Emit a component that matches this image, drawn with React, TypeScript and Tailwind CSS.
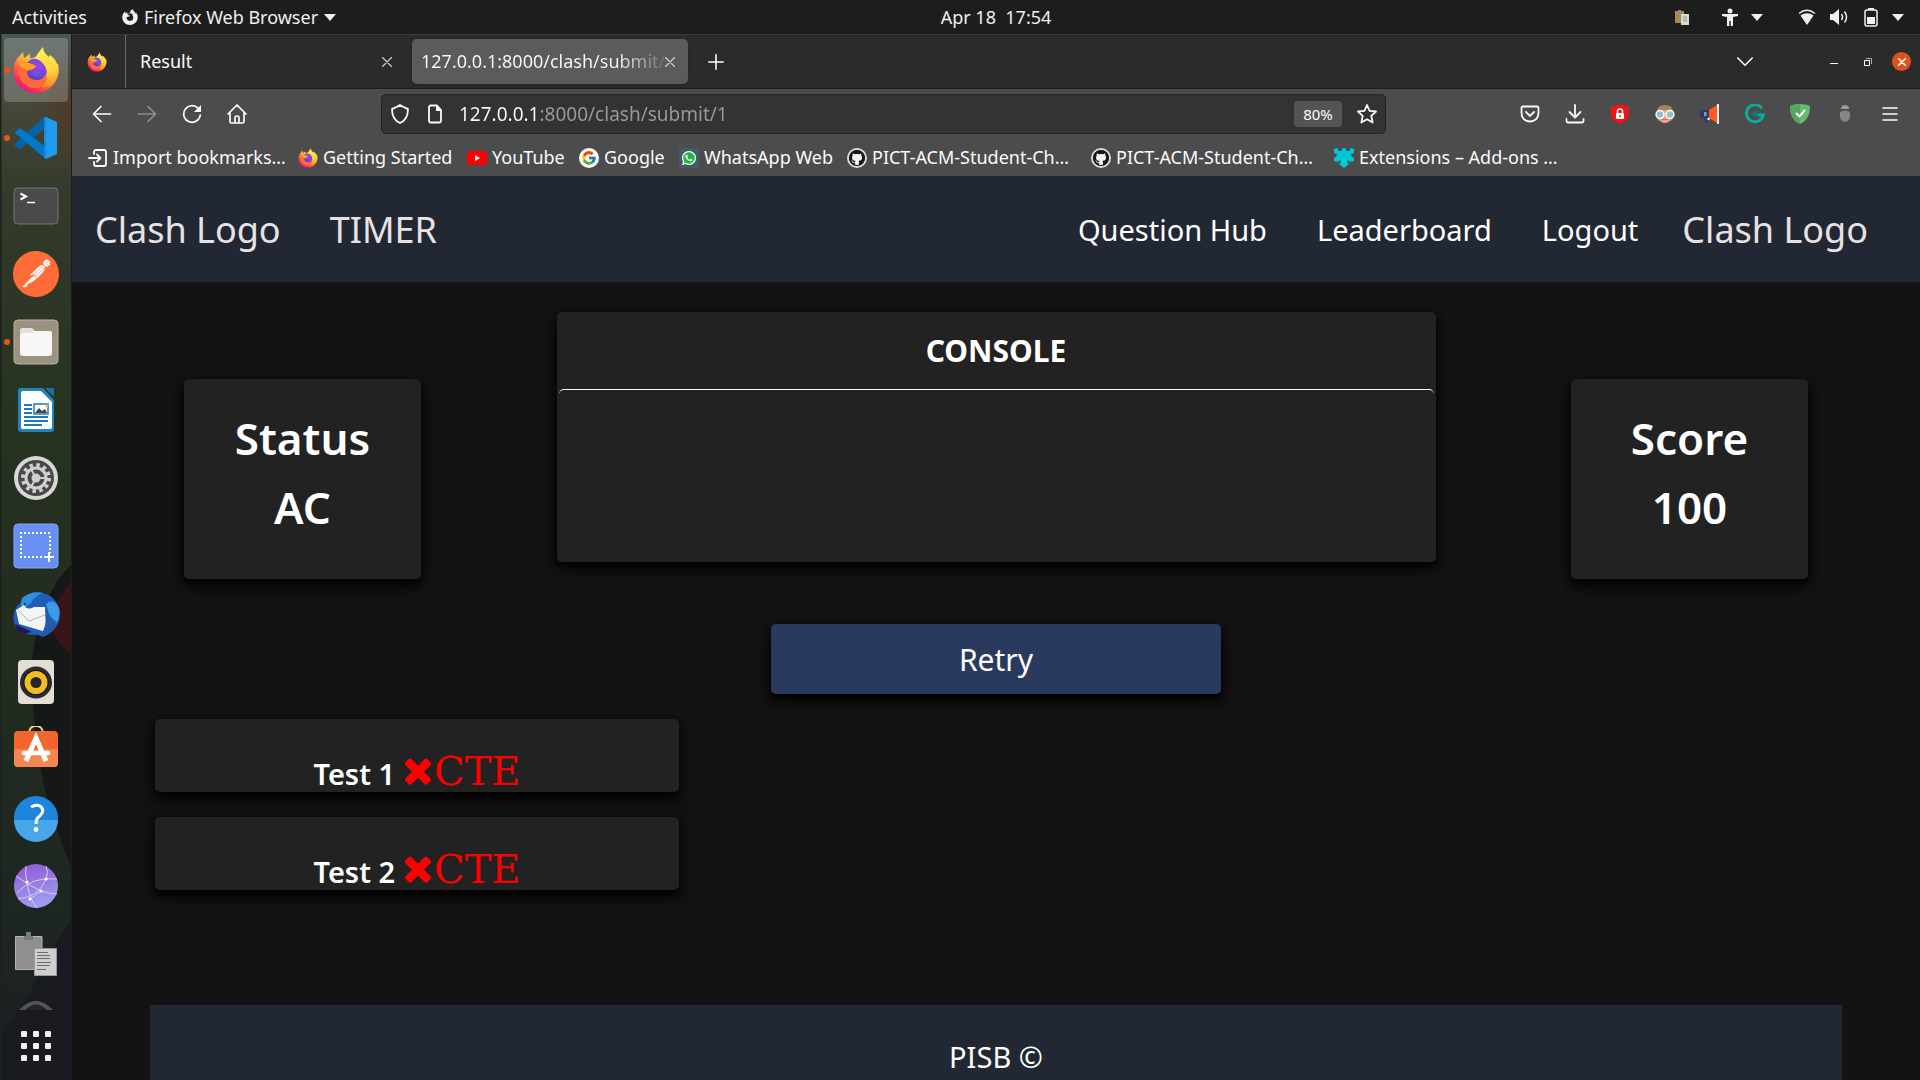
import type { ReactNode } from "react";
import { FcGoogle } from "react-icons/fc";
import { FaGithub, FaWhatsapp } from "react-icons/fa";
import { SiFirefoxbrowser, SiPostman } from "react-icons/si";

/* ---------- shared drawings ---------- */

function Firefox({ size, id }: { size: number; id: string }) {
  return (
    <svg width={size} height={size} viewBox="0 0 48 48" aria-hidden="true">
      <defs>
        <linearGradient id={`${id}-body`} x1="0.85" y1="0.1" x2="0.25" y2="0.95">
          <stop offset="0" stopColor="#fff44f" />
          <stop offset="0.35" stopColor="#ffbd3a" />
          <stop offset="0.62" stopColor="#ff6a3d" />
          <stop offset="0.85" stopColor="#ff2f52" />
          <stop offset="1" stopColor="#e31587" />
        </linearGradient>
        <radialGradient id={`${id}-ball`} cx="0.6" cy="0.35" r="0.7">
          <stop offset="0" stopColor="#a63df0" />
          <stop offset="0.6" stopColor="#6e4be0" />
          <stop offset="1" stopColor="#4a3aa8" />
        </radialGradient>
        <linearGradient id={`${id}-tail`} x1="0.5" y1="0" x2="0.7" y2="1">
          <stop offset="0" stopColor="#fff44f" />
          <stop offset="0.6" stopColor="#ffd23c" />
          <stop offset="1" stopColor="#ff8a1f" />
        </linearGradient>
      </defs>
      <path
        d="M1.5 25C1.5 18 4 12.500 8 9.500L11 6L12 12C14 11 15.500 9.500 17.500 7.500L18.500 12.500C22 11 29 11 33 15L46 18C49 33 39 47 24 47C11 47 1.500 37.500 1.500 25Z"
        fill={`url(#${id}-body)`}
      />
      <circle cx="24" cy="23.500" r="11" fill={`url(#${id}-ball)`} />
      <path
        d="M22 12.500C25 10 27 5 31 1C31.500 6 34 8.500 37 11L38 9C44 13 47 20 46.500 27C45 37 36 42 29 41C35 38 37 31 34.500 24C32.500 18 29 13.500 22 12.500Z"
        fill={`url(#${id}-tail)`}
      />
      <path
        d="M6 16C12 15.500 19 16.500 24 20C23 23 19 24 15.500 25C14 29 18 34 25 34C29 34 32 32 34 29C35 38 28 43 21 42C11 41 5 32 6 16Z"
        fill="#ff6a3d"
      />
      <path d="M6 16C12 15.500 19 16.500 24 20C23 23 19 23 15.500 24.500C12 23 8 21 6 16Z" fill="#ffa11c" />
    </svg>
  );
}

const stroke = {
  fill: "none",
  stroke: "currentColor",
  strokeLinecap: "round" as const,
  strokeLinejoin: "round" as const,
};

function Line({ d, size = 20, w = 2 }: { d: string; size?: number; w?: number }) {
  return (
    <svg width={size} height={size} viewBox="0 0 20 20" aria-hidden="true" {...stroke} strokeWidth={w}>
      <path d={d} />
    </svg>
  );
}

function Caret() {
  return (
    <svg width="12" height="7" viewBox="0 0 12 7" aria-hidden="true">
      <path d="M0 0H12L6 7Z" fill="#f0f0f0" />
    </svg>
  );
}

/* ---------- desktop top bar ---------- */

function TopBar() {
  return (
    <header className="grid h-[34px] shrink-0 grid-cols-[72px_1fr_auto_1fr] items-center bg-[#1d1d1d] px-3 text-[18px] text-[#f0f0f0]">
      <button className="text-left whitespace-nowrap">Activities</button>
      <button className="ml-[38px] flex items-center gap-[6px] justify-self-start">
        <SiFirefoxbrowser size={16} />
        <span>Firefox Web Browser</span>
        <Caret />
      </button>
      <button className="whitespace-pre">Apr 18  17:54</button>
      <div className="flex items-center justify-end pr-1">
        <svg width="16" height="16" viewBox="0 0 16 16" className="mr-8" aria-hidden="true">
          <path d="M1 2H10V14H1Z" fill="#a98657" />
          <path d="M4 1H7V4H4Z" fill="#8c8c84" />
          <path d="M7 5H15V16H7Z" fill="#d9d9d6" />
          <path d="M9 8H13M9 10H13M9 12H13" stroke="#999" />
        </svg>
        <svg width="16" height="18" viewBox="0 0 16 18" className="mr-[13px]" aria-hidden="true">
          <circle cx="8" cy="3" r="2.500" fill="#f0f0f0" />
          <path d="M0 6H16V8L11 9V18H8.700V13H7.300V18H5V9L0 8Z" fill="#f0f0f0" />
        </svg>
        <Caret />
        <svg width="18" height="16" viewBox="0 0 18 16" className="ml-[35px]" aria-hidden="true">
          <path d="M1 4.500C6 0.500 12 0.500 17 4.500" fill="none" stroke="#f0f0f0" strokeWidth="1.500" />
          <path d="M2.500 6.500C7 3.500 11 3.500 15.500 6.500L9 16Z" fill="#f0f0f0" />
        </svg>
        <svg width="18" height="16" viewBox="0 0 18 16" className="ml-[14px]" aria-hidden="true">
          <path d="M0 5H3L9 0V16L3 11H0Z" fill="#f0f0f0" />
          <path d="M11.500 5Q13.500 8 11.500 11M14.500 2.500Q18.500 8 14.500 13.500" fill="none" stroke="#f0f0f0" strokeWidth="1.500" />
        </svg>
        <svg width="14" height="19" viewBox="0 0 14 19" className="mr-[14px] ml-4" aria-hidden="true">
          <path d="M4 0H10V2H4Z" fill="#f0f0f0" />
          <rect x="1" y="2" width="12" height="16" rx="2" fill="none" stroke="#f0f0f0" strokeWidth="1.500" />
          <path d="M3 9H11V16H3Z" fill="#f0f0f0" />
        </svg>
        <Caret />
      </div>
    </header>
  );
}

/* ---------- dock ---------- */

const dockIcons: { name: string; running?: boolean; active?: boolean; art: ReactNode }[] = [
  { name: "Firefox", running: true, active: true, art: <Firefox size={48} id="dock" /> },
  {
    name: "Visual Studio Code",
    running: true,
    art: (
      <>
        <path d="M3 30L32 3V15L8 35L3 32Z" fill="#0065a9" />
        <path d="M3 18L8 14L34 33V45L3 19Z" fill="#007acc" />
        <path d="M34 3L45 8V40L34 45Z" fill="#1f9cf0" />
        <path d="M32 3L34 3V45L32 44Z" fill="#1789d8" />
      </>
    ),
  },
  {
    name: "Terminal",
    art: (
      <>
        <rect x="2" y="6" width="44" height="36" rx="4" fill="#4a4a4a" stroke="#767676" />
        <path d="M8.500 11.500L14 14.500L8.500 17.500" fill="none" stroke="#fff" strokeWidth="2" />
        <path d="M15 20.500H23" stroke="#fff" strokeWidth="1.500" />
      </>
    ),
  },
  {
    name: "Postman",
    art: (
      <>
        <circle cx="24" cy="24" r="22" fill="#fff" />
        <SiPostman x="1" y="1" size={46} color="#ff6c37" />
      </>
    ),
  },
  {
    name: "Files",
    running: true,
    art: (
      <>
        <rect x="2" y="2" width="44" height="44" rx="4" fill="#9b917f" stroke="#bcb4a5" />
        <path d="M8 14V12Q8 10 10 10H20L23 13V20H8Z" fill="#e4e0d8" />
        <path d="M10 15H20L23 13H38Q40 13 40 15V35Q40 38 37 38H11Q8 38 8 35V17Z" fill="#f8f7f5" />
      </>
    ),
  },
  {
    name: "LibreOffice Writer",
    art: (
      <>
        <path d="M9 2H31L42 14V43Q42 46 39 46H9Q6 46 6 43V5Q6 2 9 2Z" fill="#2383bd" />
        <path d="M33 2H42V11Z" fill="#1a72a8" />
        <path d="M10 5H29L40 16V41Q40 43 38 43H10Q9 43 9 41V7Z" fill="#fff" />
        <path d="M12 19H20M12 23H20M12 27H20M12 31H36M12 35H36M12 39H30" stroke="#1f7ab5" strokeWidth="2" />
        <path d="M22 18H36V28H22Z" fill="#fff" stroke="#1f7ab5" strokeWidth="1.500" />
        <path d="M23 27L27 22L30 25L33 23L35 27Z" fill="#444" />
        <path d="M32 18.500H36V22Z" fill="#f5b63c" />
      </>
    ),
  },
  {
    name: "Settings",
    art: (
      <>
        <circle cx="24" cy="24" r="22" fill="#d8d8d6" />
        <circle cx="24" cy="24" r="18" fill="#484848" />
        <circle cx="24" cy="24" r="13" fill="none" stroke="#d0d0ce" strokeWidth="4" strokeDasharray="3.400 3.400" />
        <circle cx="24" cy="24" r="10" fill="none" stroke="#d0d0ce" strokeWidth="3" />
        <circle cx="24" cy="24" r="4.500" fill="#d0d0ce" />
        <path d="M24 24H34M24 24L19 15M24 24L19 33" stroke="#d0d0ce" strokeWidth="2" />
      </>
    ),
  },
  {
    name: "Screenshot",
    art: (
      <>
        <rect x="2" y="2" width="44" height="44" rx="4" fill="#6790f2" stroke="#86a6f5" />
        <path d="M8 11H38M9 14V36M38 14V31M8 35H32" fill="none" stroke="#fff" strokeWidth="2" strokeDasharray="2 2" />
        <path d="M37 30V40M32 35H42" stroke="#fff" strokeWidth="2" />
      </>
    ),
  },
  {
    name: "Thunderbird",
    art: (
      <>
        <path d="M12 7Q19 1 30 3Q45 6 48 22Q48 40 31 47L26 45Q8 45 3 36Q-2 22 9 12Z" fill="#1f5fb8" />
        <path d="M10 8Q20 0 31 3Q22 6 19 13L10 20Q8 13 10 8Z" fill="#2f8fdd" />
        <path d="M34 14Q41 7 47 18Q49 30 41 38Q38 27 34 14Z" fill="#3b9be6" />
        <path d="M3 34L20 42L12 44Q5 42 3 34Z" fill="#2a1458" />
        <path d="M4 20L12 15Q15 21 22 17L33 17L34 42L7 34Z" fill="#f6f5f6" />
        <path d="M6 20L17 31L33 25" fill="none" stroke="#b5b2b8" />
        <path d="M33 16Q37 30 29 46Q42 42 45 32Q39 30 33 16Z" fill="#245bab" />
        <circle cx="13" cy="14" r="1" fill="#102a55" />
      </>
    ),
  },
  {
    name: "Rhythmbox",
    art: (
      <>
        <rect x="6" y="2" width="36" height="44" rx="4" fill="#e3ded3" />
        <circle cx="24" cy="24.500" r="16" fill="#2c2b33" />
        <circle cx="24" cy="24.500" r="12.500" fill="#111" />
        <circle cx="24" cy="24.500" r="11.500" fill="#f0bd22" />
        <circle cx="24" cy="24.500" r="5.500" fill="#26252a" />
      </>
    ),
  },
  {
    name: "Software",
    art: (
      <>
        <path d="M17 10V6Q18 0 24 0Q30 0 31 6V10" fill="none" stroke="#f8cf94" strokeWidth="2" />
        <rect x="2" y="5" width="44" height="36" rx="4" fill="#f2662c" />
        <path d="M2 23H46V37Q46 41 42 41H6Q2 41 2 37Z" fill="#f58551" />
        <path d="M14 35L24 12L34 35" fill="none" stroke="#fff" strokeWidth="5" />
        <path d="M12 27H36" stroke="#fff" strokeWidth="4.500" strokeLinecap="round" />
      </>
    ),
  },
  {
    name: "Help",
    art: (
      <>
        <circle cx="24" cy="24" r="22" fill="#1d86dc" />
        <path d="M2 26H46A22 22 0 0 1 2 26Z" fill="#46a6e8" />
        <path d="M19 13Q24 10 28 12Q32 15 30 19Q28 22 25.500 24Q24 26 24 30" fill="none" stroke="#fff" strokeWidth="3" />
        <circle cx="24" cy="35.500" r="2.400" fill="#fff" />
      </>
    ),
  },
  {
    name: "Web",
    art: (
      <>
        <defs>
          <linearGradient id="web" x1="0" y1="0" x2="0.300" y2="1">
            <stop offset="0" stopColor="#8f55d2" />
            <stop offset="1" stopColor="#9c9df0" />
          </linearGradient>
        </defs>
        <circle cx="24" cy="24" r="22" fill="url(#web)" />
        <path
          d="M14 4Q13 12 15 21Q17 36 25 46M34 4Q37 10 34 17Q27 35 6 37M4 14Q14 22 29 29Q38 32 45 32M5 31Q20 14 45 17M18 37L29 29"
          fill="none"
          stroke="#d9c8f5"
        />
        <g fill="#fff">
          <circle cx="15" cy="20" r="1.600" />
          <circle cx="34" cy="17" r="1.600" />
          <circle cx="29" cy="29" r="1.600" />
          <circle cx="18" cy="37" r="1.600" />
        </g>
      </>
    ),
  },
  {
    name: "Clipboard",
    art: (
      <>
        <path d="M3.500 6.500H30V39.500H3.500Z" fill="#8f8f8f" stroke="#b4b4b4" />
        <path d="M12 10V6H14V2H19V6H21V10Z" fill="#7a7a7a" />
        <path d="M22.500 18.500H44.500V45.500H22.500Z" fill="#cfcfcf" stroke="#999" />
        <path d="M25 22.500H36M25 25.500H38M25 28.500H38M25 32.500H39M25 35.500H38M25 39.500H34" stroke="#6b6b6b" />
      </>
    ),
  },
];

function Dock() {
  return (
    <nav aria-label="Dock" className="relative flex w-[72px] shrink-0 flex-col items-center gap-1 overflow-hidden bg-[#232c21] pt-1">
      <svg className="absolute inset-0 h-full w-full" viewBox="0 0 72 1046" preserveAspectRatio="none" aria-hidden="true">
        <defs>
          <linearGradient id="wall" x1="0" y1="0" x2="0" y2="1">
            <stop offset="0" stopColor="#4b5653" />
            <stop offset="0.080" stopColor="#454536" />
            <stop offset="0.150" stopColor="#333b2b" />
            <stop offset="0.400" stopColor="#263120" />
            <stop offset="0.700" stopColor="#202a20" />
            <stop offset="0.900" stopColor="#1d2422" />
            <stop offset="1" stopColor="#1a1b22" />
          </linearGradient>
          <radialGradient id="brown">
            <stop offset="0" stopColor="#4d3a27" />
            <stop offset="1" stopColor="#4d3a27" stopOpacity="0" />
          </radialGradient>
        </defs>
        <rect width="72" height="1046" fill="url(#wall)" />
        <ellipse cx="68" cy="80" rx="36" ry="60" fill="url(#brown)" />
        <path d="M72 530Q38 560 30 640Q36 720 46 760Q57 800 72 835Z" fill="#161717" />
        <path d="M72 548Q56 565 48 588Q60 614 72 620Z" fill="#3a1417" />
        <path d="M72 885Q44 925 30 960L0 1000V1046H72Z" fill="#1a1b21" />
        <path d="M0 0H1.500V1046H0Z" fill="#1a211f" />
        <path d="M71 0H72V1046H71Z" fill="#1a1d1a" />
      </svg>
      {dockIcons.map((icon) => (
        <button
          key={icon.name}
          aria-label={icon.name}
          className={`relative flex size-16 shrink-0 items-center justify-center rounded ${icon.active ? "bg-white/20" : ""}`}
        >
          {icon.running && <span className="absolute top-[29px] left-0 size-[6px] rounded-full bg-[#e95420]" />}
          <svg width="48" height="48" viewBox="0 0 48 48" aria-hidden="true">
            {icon.art}
          </svg>
        </button>
      ))}
      <div className="relative h-[22px] shrink-0">
        <svg width="48" height="22" viewBox="0 0 48 22" aria-hidden="true">
          <path d="M7 20Q24 2 41 20Z" fill="#555" />
          <path d="M13 20Q24 9 35 20Z" fill="#242424" />
        </svg>
      </div>
      <button aria-label="Show applications" className="relative mt-[11px] grid grid-cols-3 gap-[6px] py-1">
        {[0, 1, 2, 3, 4, 5, 6, 7, 8].map((n) => (
          <span key={n} className="size-[6px] rounded-[1px] bg-[#f2f2f2]" />
        ))}
      </button>
    </nav>
  );
}

/* ---------- browser chrome ---------- */

function TabStrip() {
  return (
    <div className="flex h-[55px] shrink-0 items-center border-t border-b border-t-[#3a3a3a] border-b-[#1c1c1c] bg-[#2b2b2b] text-[18px] text-[#fbfbfe]">
      <button aria-label="Pinned tab" className="flex w-[54px] items-center justify-center self-stretch border-r border-[#6a6a6a] pr-1">
        <Firefox size={20} id="pin" />
      </button>
      <div role="tab" className="flex w-[282px] items-center justify-between pr-4 pl-[14px]">
        <span>Result</span>
        <button aria-label="Close tab" className="text-[#d0d0d0]">
          <Line size={10} d="M1 1L19 19M19 1L1 19" w={2.4} />
        </button>
      </div>
      <div role="tab" aria-selected="true" className="ml-1 flex h-[45px] w-[276px] items-center justify-between rounded-[5px] bg-[#5b5b5b] pr-[14px] pl-[9px] shadow-sm">
        <span className="bg-linear-to-r from-[#fbfbfe] from-80% to-[#6a6a6a] bg-clip-text whitespace-nowrap text-transparent">
          127.0.0.1:8000/clash/submit/
        </span>
        <button aria-label="Close tab" className="text-[#d0d0d0]">
          <Line size={10} d="M1 1L19 19M19 1L1 19" w={2.4} />
        </button>
      </div>
      <button aria-label="New tab" className="ml-5">
        <Line size={16} d="M10 1V19M1 10H19" w={2} />
      </button>
      <div className="ml-auto flex items-center pr-[9px]">
        <button aria-label="List all tabs" className="mr-[77px]">
          <Line size={16} d="M1 5L10 14L19 5" w={2} />
        </button>
        <button aria-label="Minimize" className="mt-1 h-px w-2 bg-white" />
        <button aria-label="Restore" className="mr-5 ml-[26px]">
          <svg width="8" height="8" viewBox="0 0 8 8" fill="none" aria-hidden="true">
            <path d="M0.500 2.500H5.500V7.500H0.500Z" stroke="#fff" />
            <path d="M2 0.500H7.500V6" stroke="#aaa" />
          </svg>
        </button>
        <button aria-label="Close" className="flex size-[19px] items-center justify-center rounded-full bg-[#e2501c]">
          <Line size={8} d="M1 1L19 19M19 1L1 19" w={4} />
        </button>
      </div>
    </div>
  );
}

function Toolbar() {
  return (
    <div className="flex h-[50px] shrink-0 items-center text-[#fbfbfe]">
      <div className="flex w-[309px] items-center gap-[25px] pl-5">
        <button aria-label="Back">
          <Line d="M18.500 10H1.500M9 2.500L1.500 10L9 17.500" w={1.7} />
        </button>
        <button aria-label="Forward" className="text-[#8f8f90]">
          <Line d="M1.500 10H18.500M11 2.500L18.500 10L11 17.500" w={1.7} />
        </button>
        <button aria-label="Reload">
          <svg width="20" height="20" viewBox="0 0 20 20" aria-hidden="true">
            <path d="M16 4.200A8.300 8.300 0 1 0 18.300 11" {...stroke} strokeWidth="1.700" />
            <path d="M19 1V8H12Z" fill="currentColor" />
          </svg>
        </button>
        <button aria-label="Home">
          <Line d="M1 10L10 1L19 10M3 8.500V17.500Q3 19 4.500 19H15.500Q17 19 17 17.500V8.500M8 19V14Q8 12 10 12Q12 12 12 14V19" w={1.7} />
        </button>
      </div>
      <div className="flex h-10 w-[1005px] items-center rounded-[5px] border border-[#222] bg-[#333] pr-2 pl-2">
        <Line d="M10 1C13 3 16 4 18 5C18 12 15 17 10 19C5 17 2 12 2 5C4 4 7 3 10 1Z" w={1.8} />
        <svg width="20" height="20" viewBox="0 0 20 20" className="mr-[14px] ml-[15px]" aria-hidden="true">
          <path d="M12 1.500H6Q4 1.500 4 3.500V16.500Q4 18.500 6 18.500H14Q16 18.500 16 16.500V6Z" {...stroke} strokeWidth="1.800" />
          <path d="M11 1V7H17Z" fill="currentColor" />
        </svg>
        <input
          aria-label="Address"
          defaultValue="127.0.0.1:8000/clash/submit/1"
          className="min-w-0 flex-1 bg-[linear-gradient(90deg,#fbfbfe_81px,#9a9a9a_81px)] bg-clip-text text-[19px] text-transparent outline-none"
        />
        <button className="h-[26px] w-12 rounded bg-[#545454] text-[15px]">80%</button>
        <button aria-label="Bookmark this page" className="ml-[15px]">
          <Line d="M10 1L12.600 6.800L19 7.500L14.300 11.800L15.600 18.500L10 15.200L4.400 18.500L5.700 11.800L1 7.500L7.400 6.800Z" w={1.8} />
        </button>
      </div>
      <div className="ml-auto flex items-center gap-[25px] pr-5">
        <button aria-label="Pocket">
          <Line d="M3 2.500H17Q18.500 2.500 18.500 4V9C18.500 14 15 17.500 10 17.500C5 17.500 1.500 14 1.500 9V4Q1.500 2.500 3 2.500ZM6 8L10 12L14 8" w={1.8} />
        </button>
        <button aria-label="Downloads">
          <Line d="M10 1V13M4.500 8L10 13.500L15.500 8M1.500 15V17Q1.500 18.500 3 18.500H17Q18.500 18.500 18.500 17V15" w={1.8} />
        </button>
        <button aria-label="Password extension">
          <svg width="20" height="20" viewBox="0 0 20 20" aria-hidden="true">
            <path d="M10 0L19 3V10C19 15 15 18 10 20C5 18 1 15 1 10V3Z" fill="#ee1418" />
            <rect x="6" y="9" width="8" height="6" rx="1" fill="#fff" />
            <path d="M7.500 9V7Q7.500 5 10 5Q12.500 5 12.500 7V9" fill="none" stroke="#fff" strokeWidth="1.500" />
            <path d="M10 11V13" stroke="#ee1418" strokeWidth="1.500" />
          </svg>
        </button>
        <button aria-label="Reader extension">
          <svg width="20" height="20" viewBox="0 0 20 20" aria-hidden="true">
            <path d="M2 8Q2 1 10 1Q18 1 18 8V14Q18 17 15 17H5Q2 17 2 14Z" fill="#a3835a" />
            <path d="M4 8Q10 4 16 8V14Q15 19 10 19Q5 19 4 14Z" fill="#e8a583" />
            <circle cx="5" cy="10.500" r="4" fill="#8fc0c8" stroke="#fff" strokeWidth="1.400" />
            <circle cx="15" cy="10.500" r="4" fill="#8fc0c8" stroke="#fff" strokeWidth="1.400" />
            <path d="M7 15.500H13" stroke="#c9785c" />
          </svg>
        </button>
        <button aria-label="Announcement extension">
          <svg width="20" height="20" viewBox="0 0 20 20" aria-hidden="true">
            <path d="M2 6H9V14L8 19H5L4 14H2Q0 13 0 10Q0 7 2 6Z" fill="#2a3d63" />
            <path d="M9 6L17 1V19L9 14Z" fill="#ff5a26" />
            <path d="M17 0H19V20H17Z" fill="#eee" />
            <circle cx="8.500" cy="15" r="1.200" fill="#fff" />
            <path d="M4 8H6.500V12H4Z" fill="#8b97ad" />
          </svg>
        </button>
        <button aria-label="Writing extension">
          <svg width="20" height="20" viewBox="0 0 20 20" aria-hidden="true">
            <path d="M17 4.500A8.500 8.500 0 1 0 18.300 11H12" fill="none" stroke="#0cab9c" strokeWidth="3" />
            <path d="M6.500 10L11 6L12.500 9L14 12L11 14Z" fill="#087f76" />
          </svg>
        </button>
        <button aria-label="Shield extension">
          <svg width="20" height="20" viewBox="0 0 20 20" aria-hidden="true">
            <path d="M10 0Q16 0 20 2C20 10 18 16 10 20C2 16 0 10 0 2Q4 0 10 0Z" fill="#67b96f" />
            <path d="M10 0Q4 0 0 2C0 10 2 16 10 20Z" fill="#58a562" />
            <path d="M6 9L9.500 12.500L15 6" fill="none" stroke="#fff" strokeWidth="2" />
          </svg>
        </button>
        <button aria-label="Privacy extension">
          <svg width="20" height="20" viewBox="0 0 20 20" aria-hidden="true">
            <path d="M6 5Q6 1 10 1Q14 1 14 5Z" fill="#9a9a9a" />
            <path d="M5 8Q10 5 15 8V12Q15 17 10 18Q5 17 5 12Z" fill="#858585" />
          </svg>
        </button>
        <button aria-label="Menu">
          <Line d="M3 4H17M3 10H17M3 16H17" w={1.6} />
        </button>
      </div>
    </div>
  );
}

function GitHubMark() {
  return (
    <span className="flex size-5 items-center justify-center rounded-full border-2 border-[#dcdcdc] bg-[#191717]">
      <svg width="16" height="16" viewBox="0 0 16 16" aria-hidden="true">
        <circle cx="8" cy="8" r="7" fill="#f4f4f4" />
        <FaGithub size={16} color="#191717" />
      </svg>
    </span>
  );
}

const bookmarks: { title: string; width: string; icon: ReactNode }[] = [
  {
    title: "Import bookmarks…",
    width: "w-[210px]",
    icon: <Line d="M6 6V4Q6 2 8 2H16Q18 2 18 4V16Q18 18 16 18H8Q6 18 6 16V14M1 10H12M9 6.500L12.500 10L9 13.500" w={1.8} />,
  },
  { title: "Getting Started", width: "w-[169px]", icon: <Firefox size={20} id="bm" /> },
  {
    title: "YouTube",
    width: "w-[112px]",
    icon: (
      <svg width="20" height="20" viewBox="0 0 20 20" aria-hidden="true">
        <rect y="3" width="20" height="14" rx="3.500" fill="#f00" />
        <path d="M8 7L13 10L8 13Z" fill="#fff" />
      </svg>
    ),
  },
  {
    title: "Google",
    width: "w-[100px]",
    icon: (
      <span className="flex size-5 items-center justify-center rounded-full bg-white">
        <FcGoogle size={16} />
      </span>
    ),
  },
  {
    title: "WhatsApp Web",
    width: "w-[168px]",
    icon: (
      <span className="flex size-5 items-center justify-center bg-[#455a64]">
        <svg width="16" height="16" viewBox="0 0 16 16" aria-hidden="true">
          <circle cx="8" cy="8" r="7" fill="#25b34b" />
          <FaWhatsapp size={16} color="#fff" />
        </svg>
      </span>
    ),
  },
  { title: "PICT-ACM-Student-Ch…", width: "w-[244px]", icon: <GitHubMark /> },
  { title: "PICT-ACM-Student-Ch…", width: "w-[243px]", icon: <GitHubMark /> },
  {
    title: "Extensions – Add-ons …",
    width: "w-[240px]",
    icon: (
      <svg width="20" height="20" viewBox="0 0 20 20" aria-hidden="true">
        <path
          d="M0 1L3 0L5 3H8Q7 0 10 0Q13 0 12 3H15L17 0L20 1V5L17 6L18 9L20 10V13L16 14L14 12L13 14L15 16L10 20L5 16L7 14L6 12L4 14L0 13V10L2 9L3 6L0 5Z"
          fill="#00c8d7"
        />
      </svg>
    ),
  },
];

function Bookmarks() {
  return (
    <nav aria-label="Bookmarks" className="flex h-[38px] shrink-0 items-center border-b border-[#222] pl-4 text-[18px] text-[#fbfbfe]">
      {bookmarks.map((b, i) => (
        <a key={i} href="#" className={`flex shrink-0 items-center gap-[5px] whitespace-nowrap ${b.width}`}>
          {b.icon}
          <span>{b.title}</span>
        </a>
      ))}
    </nav>
  );
}

/* ---------- web page ---------- */

const cardShadow = "shadow-[0_5px_8px_0_rgba(0,0,0,0.9),0_6px_20px_0_rgba(0,0,0,0.6)]";

function SiteNav() {
  return (
    <nav aria-label="Site" className="flex h-[105px] shrink-0 items-center bg-[#212833] pr-[52px] pl-[23px] text-[36px] text-[#e9e2e2]">
      <span>Clash Logo</span>
      <span className="ml-[49px]">TIMER</span>
      <div className="ml-auto flex items-center gap-[50px] text-[29px] text-white">
        <a href="#">Question Hub</a>
        <a href="#">Leaderboard</a>
        <a href="#">Logout</a>
      </div>
      <span className="ml-[44px]">Clash Logo</span>
    </nav>
  );
}

function StatCard({ label, value }: { label: string; value: string }) {
  return (
    <section className={`mt-[67px] h-[200px] w-[237px] rounded-[5px] bg-[#222] pt-[25px] text-center text-[44px] leading-[69px] font-semibold text-white ${cardShadow}`}>
      <h2>{label}</h2>
      <p>{value}</p>
    </section>
  );
}

function TestCard({ label }: { label: string }) {
  return (
    <li className={`flex h-[73px] items-baseline justify-center overflow-hidden rounded-[5px] bg-[#222] pt-8 ${cardShadow}`}>
      <span className="mr-[9px] text-[29px] leading-[40px] font-semibold text-white">{label}</span>
      <svg width="28" height="27" viewBox="290 340 1212 1226" aria-hidden="true">
        <path
          fill="#f00"
          d="M1490 1322q0 40-28 68l-136 136q-28 28-68 28t-68-28l-294-294-294 294q-28 28-68 28t-68-28l-136-136q-28-28-28-68t28-68l294-294-294-294q-28-28-28-68t28-68l136-136q28-28 68-28t68 28l294 294 294-294q28-28 68-28t68 28l136 136q28 28 28 68t-28 68l-294 294 294 294q28 28 28 68z"
        />
      </svg>
      <span className="ml-[2px] font-['DejaVu_Serif',serif] text-[40px] leading-[40px] text-[#f00]">CTE</span>
    </li>
  );
}

function Page() {
  return (
    <div className="flex min-h-0 flex-1 flex-col overflow-hidden bg-[#131313]">
      <SiteNav />
      <main className="flex shrink-0 flex-col pt-[30px]">
        <div className="flex items-start justify-between px-[112px]">
          <StatCard label="Status" value="AC" />
          <section className={`h-[250px] w-[879px] rounded-[5px] bg-[#222] px-[2px] ${cardShadow}`}>
            <h2 className="h-[77px] pt-[18px] text-center text-[30px] leading-[42px] font-bold text-white">CONSOLE</h2>
            <div className="h-[168px] rounded-[5px] border-t border-white" />
          </section>
          <StatCard label="Score" value="100" />
        </div>
        <button className={`mt-[45px] h-[70px] w-[450px] self-center rounded-[5px] bg-[#293a5e] text-[30px] text-white ${cardShadow}`}>
          Retry
        </button>
        <ul className="mt-[25px] ml-[83px] flex w-[524px] flex-col gap-[25px]">
          <TestCard label="Test 1" />
          <TestCard label="Test 2" />
        </ul>
      </main>
      <footer className="mx-[78px] mt-[115px] shrink-0 bg-[#212833] py-[30px] text-center text-[29px] leading-[44px] text-white">PISB ©</footer>
    </div>
  );
}

export default function App() {
  return (
    <div className="flex h-screen flex-col overflow-hidden bg-[#131313] font-['Noto_Sans',sans-serif]">
      <TopBar />
      <div className="flex min-h-0 flex-1">
        <Dock />
        <div className="flex min-w-0 flex-1 flex-col">
          <TabStrip />
          <div className="bg-[#4c4c4c]">
            <Toolbar />
            <Bookmarks />
          </div>
          <Page />
        </div>
      </div>
    </div>
  );
}
